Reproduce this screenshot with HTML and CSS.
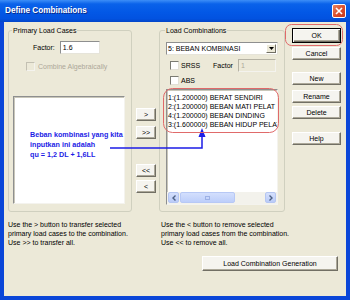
FILE: index.html
```html
<!DOCTYPE html>
<html lang="en">
<head>
    <meta charset="UTF-8">
    <title>Define Combinations</title>
    <link rel="stylesheet" href="styles.css">
</head>
<body>
    <div class="window">
        <div class="titlebar">
            <span class="title">Define Combinations</span>
            <span class="close">
                <svg width="8" height="8" viewBox="0 0 8 8"><path d="M1 1L7 7M7 1L1 7" stroke="#fff" stroke-width="1.6"/></svg>
            </span>
        </div>
        <div class="client">
            <div class="main">
                <fieldset class="group groupLeft">
                    <legend>Primary Load Cases</legend>
                    <div class="factorRow">
                        <span>Factor:</span>
                        <div class="field">1.6</div>
                    </div>
                    <div class="check disabled algebra"><span class="box"></span>Combine Algebraically</div>
                    <div class="listbox primary"></div>
                </fieldset>

                <div class="arrows">
                    <button class="btn">&gt;</button>
                    <button class="btn">&gt;&gt;</button>
                    <button class="btn remove">&lt;&lt;</button>
                    <button class="btn">&lt;</button>
                </div>

                <fieldset class="group groupRight">
                    <legend>Load Combinations</legend>
                    <div class="select">
                        <span class="selText">5: BEBAN KOMBINASI</span>
                        <span class="drop"><svg width="5" height="3" viewBox="0 0 5 3"><path d="M0 0H5L2.5 3Z" fill="#000"/></svg></span>
                    </div>
                    <div class="optRow">
                        <div class="check"><span class="box"></span>SRSS</div>
                        <span class="optFactor">Factor</span>
                        <div class="field off">1</div>
                    </div>
                    <div class="check absRow"><span class="box"></span>ABS</div>
                    <div class="listbox combos">
                        <div class="items">
                            <div>1:(1.200000) BERAT SENDIRI</div>
                            <div>2:(1.200000) BEBAN MATI PELAT</div>
                            <div>4:(1.200000) BEBAN DINDING</div>
                            <div>3:(1.600000) BEBAN HIDUP PELAT</div>
                        </div>
                        <div class="hscroll">
                            <span class="sbtn"><svg width="4" height="6" viewBox="0 0 4 6"><path d="M3.5 0.5L1 3L3.5 5.5" fill="none" stroke="#4D6185" stroke-width="1.4"/></svg></span>
                            <span class="thumb"><i></i></span>
                            <span class="track"></span>
                            <span class="sbtn"><svg width="4" height="6" viewBox="0 0 4 6"><path d="M0.5 0.5L3 3L0.5 5.5" fill="none" stroke="#4D6185" stroke-width="1.4"/></svg></span>
                        </div>
                    </div>
                </fieldset>

                <div class="actions">
                    <button class="btn ok">OK</button>
                    <button class="btn cancel">Cancel</button>
                    <button class="btn new">New</button>
                    <button class="btn rename">Rename</button>
                    <button class="btn delete">Delete</button>
                    <button class="btn help">Help</button>
                </div>
            </div>

            <div class="notes">
                <p>Use the &gt; button to transfer selected<br>primary load cases to the combination.<br>Use &gt;&gt; to transfer all.</p>
                <p>Use the &lt; button to remove selected<br>primary load cases from the combination.<br>Use &lt;&lt; to remove all.</p>
            </div>

            <div class="footer">
                <button class="btn generate">Load Combination Generation</button>
            </div>

            <div class="note">Beban kombinasi yang kita<br>inputkan ini adalah<br>qu = 1,2 DL + 1,6LL</div>
            <svg class="marks" width="342" height="274" viewBox="0 0 342 274">
                <path d="M106 126H198V114" fill="none" stroke="#1C1CE6" stroke-width="1.5"/>
                <path d="M198 106L194.5 115H201.5Z" fill="#1C1CE6"/>
                <rect x="281.5" y="2.5" width="57" height="21" rx="6" fill="none" stroke="#E06A6A"/>
                <rect x="159.5" y="66.5" width="115" height="44" rx="9" fill="none" stroke="#E06A6A"/>
            </svg>
        </div>
    </div>
</body>
</html>
```
FILE: styles.css
```css
*{
    margin: 0;
    padding: 0;
    box-sizing: border-box;
}
body{
    font: 7px/9px "Liberation Sans", Arial, sans-serif;
    color: #000;
}
.window{
    width: 350px;
    height: 300px;
    display: flex;
    flex-direction: column;
    background: #0A46D8;
}
.titlebar{
    height: 22px;
    display: flex;
    align-items: center;
    justify-content: space-between;
    padding: 0 4px 0 5px;
    background: linear-gradient(#3D8EF7 0%, #0A62EA 18%, #0358E6 55%, #0252E0 85%, #0345C8 100%);
}
.title{
    color: #fff;
    font: bold 8.2px/10px "Liberation Sans", Arial, sans-serif;
    text-shadow: 1px 1px #0B2A8A;
}
.close{
    width: 14px;
    height: 14px;
    display: flex;
    align-items: center;
    justify-content: center;
    background: linear-gradient(135deg, #E8835E, #D8492A 60%, #C43A1C);
    border: 1px solid #fff;
    border-radius: 2px;
}
.client{
    position: relative;
    flex: 1;
    margin: 0 4px 4px;
    padding: 4px 4px 0;
    background: #ECE9D8;
}
.main{
    display: flex;
    align-items: flex-start;
}
.group{
    border: 1px solid #D0D0BF;
    border-radius: 3px;
    padding: 0 0 6px;
}
.group legend{
    padding: 0 1px;
}
.groupLeft{
    width: 124px;
    padding-bottom: 7px;
}
.groupLeft legend{
    margin-left: 3px;
}
.groupRight{
    width: 126px;
    margin-left: 3px;
}
.groupRight legend{
    margin-left: 5px;
}
.field{
    height: 13px;
    background: #fff;
    border: 1px solid;
    border-color: #8E8F8F #E6E4DA #E6E4DA #8E8F8F;
    padding: 1px 2px;
    line-height: 9px;
}
.field.off{
    width: 38px;
    background: #ECE9D8;
    color: #ACA899;
    border-color: #B5B2A4 #F4F3EE #F4F3EE #B5B2A4;
}
.factorRow{
    display: flex;
    align-items: center;
    margin: 6px 0 0 24px;
    gap: 5px;
}
.factorRow .field{
    width: 40px;
}
.check{
    display: flex;
    align-items: center;
    height: 9px;
}
.box{
    width: 9px;
    height: 9px;
    margin-right: 2px;
    background: #fff;
    border: 1px solid;
    border-color: #7B7B73 #E2E0D6 #E2E0D6 #7B7B73;
}
.check.disabled{
    color: #ACA899;
}
.check.disabled .box{
    background: #ECE9D8;
    border-color: #C3C0B2 #F4F3EE #F4F3EE #C3C0B2;
}
.algebra{
    margin: 8px 0 0 17px;
}
.algebra .box{
    margin-right: 3px;
}
.listbox{
    background: #fff;
    border: 1px solid;
    border-color: #8E8F8F #F4F3EE #F4F3EE #8E8F8F;
    box-shadow: inset 1px 1px #C9C7BA;
}
.primary{
    width: 112px;
    height: 108px;
    margin: 25px 0 0 4px;
}
.arrows{
    display: flex;
    flex-direction: column;
    gap: 5px;
    margin: 82px 0 0 4px;
}
.arrows .btn{
    width: 20px;
}
.arrows .remove{
    margin-top: 20px;
}
.arrows .remove + .btn{
    margin-top: -2px;
}
.btn{
    height: 13px;
    font: 7px/9px "Liberation Sans", Arial, sans-serif;
    color: #000;
    background: #F5F4EF;
    border: 1px solid;
    border-color: #FFFFFF #716F64 #716F64 #FFFFFF;
    box-shadow: inset -1px -1px #ACA899;
}
.select{
    width: 112px;
    height: 13px;
    margin: 7px 0 0 6px;
    display: flex;
    align-items: center;
    justify-content: space-between;
    background: #fff;
    border: 1px solid;
    border-color: #8E8F8F #E6E4DA #E6E4DA #8E8F8F;
    padding: 0 1px 0 1px;
}
.drop{
    width: 10px;
    height: 9px;
    display: flex;
    align-items: center;
    justify-content: center;
    background: #ECE9D8;
    border: 1px solid;
    border-color: #fff #716F64 #716F64 #fff;
}
.optRow{
    display: flex;
    align-items: center;
    height: 13px;
    margin: 4px 0 0 10px;
}
.optFactor{
    margin: 0 5px 0 13px;
}
.absRow{
    margin: 4px 0 0 10px;
}
.combos{
    width: 112px;
    height: 116px;
    margin: 4px 0 0 6px;
    display: flex;
    flex-direction: column;
    overflow: hidden;
}
.items{
    flex: 1;
    padding: 3px 0 0 1px;
    white-space: nowrap;
    overflow: hidden;
}
.hscroll{
    height: 12px;
    display: flex;
    align-items: stretch;
    background: #F3F2EC;
    padding: 0 1px 1px 1px;
}
.sbtn{
    width: 11px;
    display: flex;
    align-items: center;
    justify-content: center;
    background: linear-gradient(#D5E0FC, #BACBF8);
    border: 1px solid #B5C6F2;
    border-radius: 2px;
}
.thumb{
    width: 55px;
    margin-left: 1px;
    display: flex;
    align-items: center;
    justify-content: center;
    background: linear-gradient(#D3DFFD, #BDCEFA);
    border: 1px solid #B7C8F5;
    border-radius: 2px;
}
.thumb i{
    width: 5px;
    height: 4px;
    border: 1px solid #9DB1E6;
}
.track{
    flex: 1;
}
.actions{
    display: flex;
    flex-direction: column;
    width: 49px;
    margin: 2px 0 0 7px;
}
.actions .btn{
    width: 49px;
}
.ok{
    height: 15px !important;
    border-color: #000 !important;
    box-shadow: inset 1px 1px #fff, inset -1px -1px #716F64, inset -2px -2px #ACA899 !important;
}
.cancel{
    margin-top: 4px;
}
.new{
    margin-top: 12px;
}
.rename{
    margin-top: 5px;
}
.delete{
    margin-top: 3px;
}
.help{
    margin-top: 13px;
}
.notes{
    display: grid;
    grid-template-columns: 153px 1fr;
    margin-top: 8px;
}
.footer{
    display: flex;
    justify-content: flex-end;
    margin: 9px 4px 0 0;
}
.generate{
    width: 136px;
    height: 15px;
}
.note{
    position: absolute;
    left: 26px;
    top: 108px;
    color: #1C1CE6;
    font: bold 7.2px/10px "Liberation Sans", Arial, sans-serif;
}
.marks{
    position: absolute;
    left: 0;
    top: 0;
    pointer-events: none;
}
```
